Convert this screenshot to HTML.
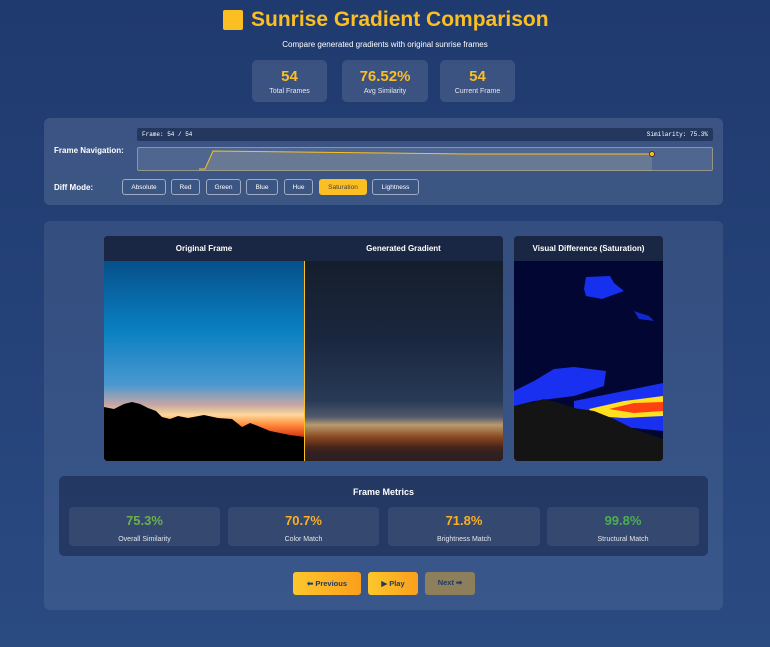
<!DOCTYPE html><html><head><style>
*{margin:0;padding:0;box-sizing:border-box}
body{width:770px;height:647px;overflow:hidden;background:linear-gradient(180deg,#1f3a6e,#2a4a82);font-family:"Liberation Sans",sans-serif;color:#fff;position:relative}
.a{position:absolute}
.card{background:rgba(255,255,255,0.12);border-radius:5px;text-align:center}
.big{color:#fbbf24;font-weight:bold;font-size:15px;line-height:17px}
.sm{font-size:7px;color:#e5e7eb;margin-top:3px}
.btn{position:absolute;top:179px;height:16px;border:1px solid rgba(255,255,255,0.5);border-radius:3px;font-size:6.5px;display:flex;align-items:center;justify-content:center;color:#fff}
.mc{position:absolute;top:31px;height:39px;background:rgba(255,255,255,0.08);border-radius:4px;text-align:center}
.mc b{display:block;font-size:13px;margin-top:6px;line-height:15px}
.mc span{font-size:7px;color:#e5e7eb;line-height:10px}
.pb{position:absolute;top:572px;height:23px;border-radius:3px;font-size:7.5px;font-weight:bold;color:#1e3a5f;text-align:center;line-height:23px;background:linear-gradient(90deg,#fcc72c,#fb9f1c)}
</style></head><body>
<div class="a" style="left:223px;top:10px;width:20px;height:20px;background:#fbbf24;border-radius:2px"></div>
<div class="a" style="left:251px;top:8px;font-size:21px;line-height:24px;font-weight:bold;color:#fbbf24">Sunrise Gradient Comparison</div>
<div class="a" style="left:0;width:770px;top:40px;text-align:center;font-size:8px">Compare generated gradients with original sunrise frames</div>
<div class="a card" style="left:252px;top:60px;width:75px;height:42px"><div class="big" style="margin-top:8px">54</div><div class="sm">Total Frames</div></div>
<div class="a card" style="left:342px;top:60px;width:86px;height:42px"><div class="big" style="margin-top:8px">76.52%</div><div class="sm">Avg Similarity</div></div>
<div class="a card" style="left:440px;top:60px;width:75px;height:42px"><div class="big" style="margin-top:8px">54</div><div class="sm">Current Frame</div></div>

<div class="a" style="left:44px;top:118px;width:679px;height:87px;background:rgba(255,255,255,0.12);border-radius:6px"></div>
<div class="a" style="left:137px;top:128px;width:576px;height:13px;background:#24385f;border-radius:2px;font-family:'Liberation Mono',monospace;font-size:6px;line-height:13px;padding:0 5px"><span>Frame: 54 / 54</span><span style="float:right">Similarity: 75.3%</span></div>
<div class="a" style="left:54px;top:146px;font-size:8px;font-weight:bold">Frame Navigation:</div>
<div class="a" style="left:137px;top:147px;width:576px;height:24px;border:1px solid rgba(220,200,120,0.5);border-radius:2px;background:rgba(255,255,255,0.1)">
<svg width="576" height="24" style="position:absolute;left:-1px;top:-1px"><path d="M62 22 L68 22 L76 4 L250 6 L330 7 L515 7 L515 24 L62 24Z" fill="rgba(180,180,160,0.25)"/><polyline points="62,22 68,22 76,4 250,6 330,7 515,7" fill="none" stroke="#fbbf24" stroke-width="1"/><circle cx="515" cy="7" r="2.5" fill="#fbbf24" stroke="#222" stroke-width="0.7"/></svg></div>
<div class="a" style="left:54px;top:183px;font-size:8px;font-weight:bold">Diff Mode:</div>
<div class="btn" style="left:122px;width:44px">Absolute</div>
<div class="btn" style="left:171px;width:29px">Red</div>
<div class="btn" style="left:206px;width:35px">Green</div>
<div class="btn" style="left:246px;width:32px">Blue</div>
<div class="btn" style="left:284px;width:29px">Hue</div>
<div class="btn" style="left:319px;width:48px;background:#fbbf24;border-color:#fbbf24;color:#444">Saturation</div>
<div class="btn" style="left:372px;width:47px">Lightness</div>

<div class="a" style="left:44px;top:221px;width:679px;height:389px;background:rgba(255,255,255,0.08);border-radius:6px"></div>
<div class="a" style="left:104px;top:236px;width:399px;height:225px;border-radius:4px;overflow:hidden;background:#000">
<div class="a" style="left:0;top:0;width:399px;height:25px;background:#1a2744;font-size:8px;font-weight:bold;line-height:25px"><span class="a" style="left:0;width:200px;text-align:center">Original Frame</span><span class="a" style="left:200px;width:199px;text-align:center">Generated Gradient</span></div>
<div class="a" style="left:0;top:25px;width:200px;height:200px;background:linear-gradient(180deg,#06508a 0%,#0a80c2 35%,#4b98cf 62%,#c7a6a4 72%,#ffd89a 77%,#ff8a3a 82%,#e0401a 87%,#000 91%)">
<svg width="200" height="200" class="a" style="left:0;top:0"><path d="M0 146 L10 148 L20 143 L28 141 L36 143 L44 147 L52 150 L58 156 L66 158 L74 155 L84 157 L100 154 L114 157 L128 158 L138 166 L146 162 L154 165 L166 170 L186 174 L200 176 L200 200 L0 200Z" fill="#000"/></svg></div>
<div class="a" style="left:200px;top:25px;width:1px;height:200px;background:#fbbf24"></div>
<div class="a" style="left:201px;top:25px;width:198px;height:200px;background:linear-gradient(180deg,#141e2c 0%,#1b2740 40%,#283a56 70%,#525a6c 78%,#b89a6e 82%,#8a4a22 88%,#4a241a 93%,#302022 96%,#2e1f22 100%)"></div>
</div>
<div class="a" style="left:514px;top:236px;width:149px;height:225px;border-radius:4px;overflow:hidden;background:#020633">
<div class="a" style="left:0;top:0;width:149px;height:25px;background:#1a2744;font-size:8px;font-weight:bold;line-height:25px;text-align:center">Visual Difference (Saturation)</div>
<svg width="149" height="200" class="a" style="left:0;top:25px"><path d="M72 16 L96 15 L100 22 L110 30 L88 38 L72 35 L70 28Z" fill="#1530ee"/><path d="M120 50 L135 55 L140 60 L125 58Z" fill="#1028cc"/><path d="M0 130 L20 120 L40 108 L60 106 L92 110 L90 125 L60 135 L20 140 L0 145Z" fill="#1a30f0"/><path d="M60 140 L110 130 L149 122 L149 170 L100 165 L60 150Z" fill="#1a30f0"/><path d="M75 148 L110 140 L149 135 L149 155 L110 157 L80 155Z" fill="#ffe020"/><path d="M95 148 L120 142 L149 141 L149 150 L120 152Z" fill="#ff4010"/><path d="M0 145 L20 141 L30 138 L45 142 L60 147 L80 150 L100 158 L120 168 L149 178 L149 200 L0 200Z" fill="#141414"/></svg></div>

<div class="a" style="left:59px;top:476px;width:649px;height:80px;background:rgba(20,35,70,0.55);border-radius:5px"><div style="text-align:center;font-size:9px;font-weight:bold;margin-top:11px">Frame Metrics</div>
<div class="mc" style="left:10px;width:151px"><b style="color:#6ab04c">75.3%</b><span>Overall Similarity</span></div>
<div class="mc" style="left:169px;width:151px"><b style="color:#fbaf24">70.7%</b><span>Color Match</span></div>
<div class="mc" style="left:329px;width:152px"><b style="color:#fbaf24">71.8%</b><span>Brightness Match</span></div>
<div class="mc" style="left:488px;width:152px"><b style="color:#4caf50">99.8%</b><span>Structural Match</span></div></div>
<div class="pb" style="left:293px;width:68px">⬅ Previous</div>
<div class="pb" style="left:368px;width:50px">▶ Play</div>
<div class="pb" style="left:425px;width:50px;background:#8d7e5c;line-height:21px">Next ➡</div>
</body></html>
